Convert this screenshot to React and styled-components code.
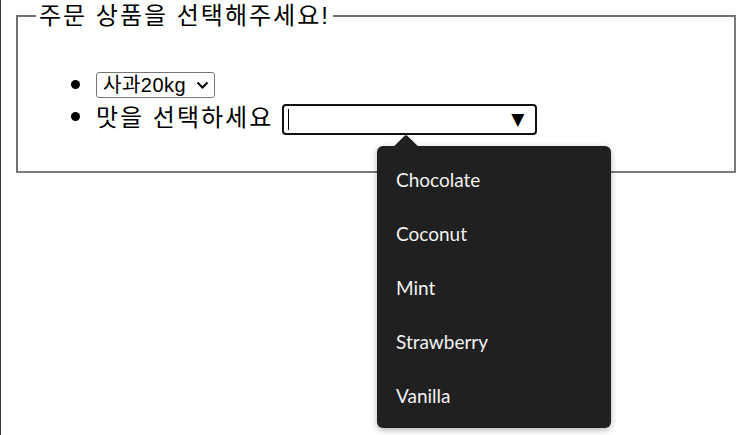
import React from 'react';
import styled, { createGlobalStyle } from 'styled-components';

const GlobalStyle = createGlobalStyle`
  html, body {
    margin: 0;
    padding: 0;
    background: #ffffff;
  }
  body {
    font-family: "Liberation Sans", "Noto Sans CJK KR", sans-serif;
    color: #000000;
  }
`;

const Page = styled.div`
  position: relative;
  box-sizing: border-box;
  min-height: 435px;
  border-left: 1px solid #3a3a3a;
  padding: 0 6px 0 15px;
`;

const Box = styled.fieldset`
  margin: 0;
  padding: 4px 18px 15px;
  border: 2px solid #707070;
  border-right-color: #7a7a7a;
  border-bottom-color: #7a7a7a;
`;

const Legend = styled.legend`
  padding: 0 3px;
  font-size: 24px;
  line-height: 32px;
  letter-spacing: 2px;
`;

const List = styled.ul`
  margin: 32px 0 24px;
  padding-left: 60px;
  font-size: 24px;
  line-height: 32px;
`;

const Item = styled.li`
  height: 32px;
  display: list-item;

  &::marker {
    font-size: 30px;
  }
`;

const SelectWrap = styled.span`
  position: relative;
  display: inline-block;
  vertical-align: 2px;
  line-height: 0;
`;

const Select = styled.select`
  appearance: none;
  font-family: "Liberation Sans", "Noto Sans CJK KR", sans-serif;
  font-size: 20px;
  width: 119px;
  height: 26px;
  border: 1px solid #767676;
  border-radius: 3px;
  background: #ffffff;
  color: #000000;
  padding: 0 24px 0 6px;
  letter-spacing: 0.5px;
`;

const Chevron = styled.svg`
  position: absolute;
  right: 6px;
  top: 9px;
  pointer-events: none;
`;

const Label = styled.span`
  margin-right: 9px;
  letter-spacing: 2px;
`;

const InputBox = styled.span`
  display: inline-flex;
  align-items: center;
  box-sizing: border-box;
  width: 255px;
  height: 31px;
  vertical-align: -4px;
  border: 2px solid #101010;
  border-radius: 4px;
  padding: 0 11px 0 4px;
  background: #ffffff;
`;

const Caret = styled.span`
  width: 1px;
  height: 21px;
  background: #000000;
`;

const Field = styled.input`
  flex: 1;
  min-width: 0;
  border: 0;
  outline: none;
  padding: 0;
  font-size: 20px;
  background: transparent;
`;

const Picker = styled.span`
  font-family: "DejaVu Sans", sans-serif;
  font-size: 17px;
  line-height: 1;
  color: #000000;
`;

const Popup = styled.div`
  position: absolute;
  left: 376px;
  top: 146px;
  width: 234px;
  box-sizing: border-box;
  padding: 7px 0 5px;
  background: #202020;
  border-radius: 6px;
  box-shadow: 0 2px 6px rgba(0, 0, 0, 0.3);

  &::before {
    content: '';
    position: absolute;
    left: 20px;
    top: -8px;
    width: 18px;
    height: 18px;
    background: #202020;
    border-radius: 3px 0 0 0;
    transform: rotate(45deg);
  }
`;

const Option = styled.div`
  position: relative;
  height: 54px;
  line-height: 54px;
  padding-left: 19px;
  font-family: "Lato", "Open Sans", sans-serif;
  font-size: 19px;
  color: #f2f2f2;
`;

const flavours = ['Chocolate', 'Coconut', 'Mint', 'Strawberry', 'Vanilla'];

const App = () => {
  return (
    <Page>
      <GlobalStyle />
      <Box>
        <Legend>주문 상품을 선택해주세요!</Legend>
        <List>
          <Item>
            <SelectWrap>
              <Select defaultValue="apple">
                <option value="apple">사과20kg</option>
              </Select>
              <Chevron width="13" height="8" viewBox="0 0 13 8">
                <path d="M1.5 1.5 L6.5 6.5 L11.5 1.5" fill="none" stroke="#000" strokeWidth="2" />
              </Chevron>
            </SelectWrap>
          </Item>
          <Item>
            <Label>맛을 선택하세요</Label>
            <InputBox>
              <Caret />
              <Field list="flavours" aria-label="맛" />
              <Picker>▼</Picker>
            </InputBox>
          </Item>
        </List>
      </Box>
      <Popup>
        {flavours.map(f => (
          <Option key={f}>{f}</Option>
        ))}
      </Popup>
    </Page>
  );
};

export default App;
